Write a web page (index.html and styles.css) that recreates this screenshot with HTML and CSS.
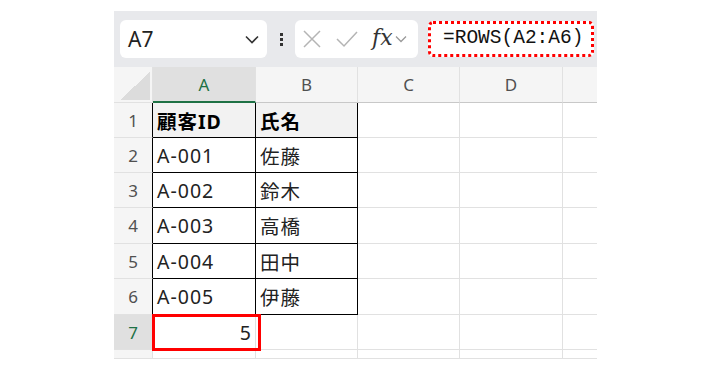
FILE: index.html
```html
<html>
<head>
  <title>ROWS</title>
  <link rel="stylesheet" href="styles.css">
</head>
<body>
  <div class="app">
    <div class="toolbar">
      <div class="namebox">
        <span>A7</span>
        <svg class="chev" width="14" height="9" viewBox="0 0 14 9"><path d="M1 1.5 L7 7.5 L13 1.5" fill="none" stroke="#333" stroke-width="1.6"/></svg>
      </div>
      <div class="dots"><i></i><i></i><i></i></div>
      <div class="fxbox">
        <svg width="20" height="20" viewBox="0 0 20 20"><path d="M2 2 L18 18 M18 2 L2 18" stroke="#b4b4b4" stroke-width="1.5"/></svg>
        <svg width="22" height="20" viewBox="0 0 22 20"><path d="M1 10 L8 17 L21 3" fill="none" stroke="#b4b4b4" stroke-width="1.5"/></svg>
        <span class="fx">fx</span>
        <svg class="chev" width="12" height="8" viewBox="0 0 12 8"><path d="M1 1.5 L6 6.5 L11 1.5" fill="none" stroke="#999" stroke-width="1.3"/></svg>
      </div>
      <div class="formula">=ROWS(A2:A6)</div>
    </div>
    <div class="grid">
      <div class="hd corner"><div class="tri"></div></div>
      <div class="hd col sel">A</div>
      <div class="hd col">B</div>
      <div class="hd col">C</div>
      <div class="hd col">D</div>
      <div class="hd col"></div>

      <div class="hd row edge">1</div>
      <div class="cell tb th">顧客ID</div>
      <div class="cell tb th">氏名</div>
      <div class="cell"></div><div class="cell"></div><div class="cell"></div>

      <div class="hd row edge">2</div>
      <div class="cell tb">A-001</div>
      <div class="cell tb">佐藤</div>
      <div class="cell"></div><div class="cell"></div><div class="cell"></div>

      <div class="hd row edge">3</div>
      <div class="cell tb">A-002</div>
      <div class="cell tb">鈴木</div>
      <div class="cell"></div><div class="cell"></div><div class="cell"></div>

      <div class="hd row edge">4</div>
      <div class="cell tb">A-003</div>
      <div class="cell tb">高橋</div>
      <div class="cell"></div><div class="cell"></div><div class="cell"></div>

      <div class="hd row edge">5</div>
      <div class="cell tb">A-004</div>
      <div class="cell tb">田中</div>
      <div class="cell"></div><div class="cell"></div><div class="cell"></div>

      <div class="hd row edge">6</div>
      <div class="cell tb">A-005</div>
      <div class="cell tb">伊藤</div>
      <div class="cell"></div><div class="cell"></div><div class="cell"></div>

      <div class="hd row sel">7</div>
      <div class="cell num active">5</div>
      <div class="cell"></div>
      <div class="cell"></div><div class="cell"></div><div class="cell"></div>

      <div class="hd row"></div>
      <div class="cell"></div><div class="cell"></div>
      <div class="cell"></div><div class="cell"></div><div class="cell"></div>
    </div>
  </div>
</body>
</html>
```

FILE: styles.css
```css
body {
  margin: 0;
  background: #fff;
}
* {
  box-sizing: border-box;
}
.app {
  margin: 11px 0 0 114px;
  width: 483px;
  font-family: "Noto Sans", "Noto Sans CJK JP", sans-serif;
}
.toolbar {
  display: flex;
  align-items: center;
  height: 56px;
  background: #e8e9ec;
  padding-left: 6px;
}
.namebox {
  display: flex;
  align-items: center;
  justify-content: space-between;
  width: 147px;
  height: 38px;
  background: #fff;
  border-radius: 6px;
  padding: 0 8px 0 8px;
  font-size: 21px;
  color: #222;
}
.dots {
  display: flex;
  flex-direction: column;
  gap: 2px;
  margin: 0 12px 0 13px;
}
.dots i {
  display: block;
  width: 3px;
  height: 3px;
  background: #333;
}
.fxbox {
  display: flex;
  align-items: center;
  gap: 14px;
  width: 123px;
  height: 38px;
  background: #fff;
  border-radius: 6px;
  padding-left: 7px;
}
.fxbox .chev {
  margin-left: -12px;
}
.fx {
  font-family: "DejaVu Serif", serif;
  font-style: italic;
  font-size: 22px;
  color: #333;
  margin-top: -4px;
}
.formula {
  margin-left: 10px;
  width: 166px;
  height: 36px;
  background: #fff;
  border: 3.5px dotted #f00;
  border-radius: 5px;
  padding-left: 12px;
  font-family: "Liberation Mono", monospace;
  font-size: 19.5px;
  line-height: 29px;
  color: #111;
  white-space: nowrap;
}
.grid {
  display: grid;
  grid-template-columns: 39px 103px 102px 102px 103px 34px;
  grid-template-rows: 36px 35px 35px 35px 36px 35px 36px 35px 9px;
  border-right: 1px solid #e1e1e1;
}
.grid > div {
  border-right: 1px solid #e1e1e1;
  border-bottom: 1px solid #e1e1e1;
}
.grid > div:nth-child(6n) {
  border-right: 0;
}
.hd {
  background: #f5f5f5;
  color: #505050;
  font-size: 17px;
  display: flex;
  align-items: center;
  justify-content: center;
}
.hd.col {
  border-bottom: 1px solid #c8c8c8;
}
.hd.sel {
  background: #e0e0e0;
  color: #1e7145;
}
.hd.col.sel {
  border-bottom: 2px solid #1e7145;
}
.hd.row.sel {
  border-right: 1px solid #1e7145;
}
.hd.edge {
  border-right: 1px solid #000;
}
.corner {
  padding: 5px 2px 2px 6px;
}
.tri {
  width: 100%;
  height: 100%;
  background: linear-gradient(to bottom right, transparent 50%, #dcdcdc 50%);
}
.cell {
  background: #fff;
  font-size: 19.5px;
  letter-spacing: 1px;
  color: #222;
  display: flex;
  align-items: center;
  padding-left: 4px;
}
.grid > .tb {
  border-right: 1px solid #000;
  border-bottom: 1px solid #000;
}
.th {
  background: #f2f2f2;
  font-weight: bold;
  color: #000;
}
.num {
  justify-content: flex-end;
  padding-right: 3px;
}
.active {
  position: relative;
}
.active::after {
  content: "";
  position: absolute;
  left: -1px;
  top: -1px;
  right: -6px;
  bottom: -2px;
  border: 3px solid #f00;
}
```
